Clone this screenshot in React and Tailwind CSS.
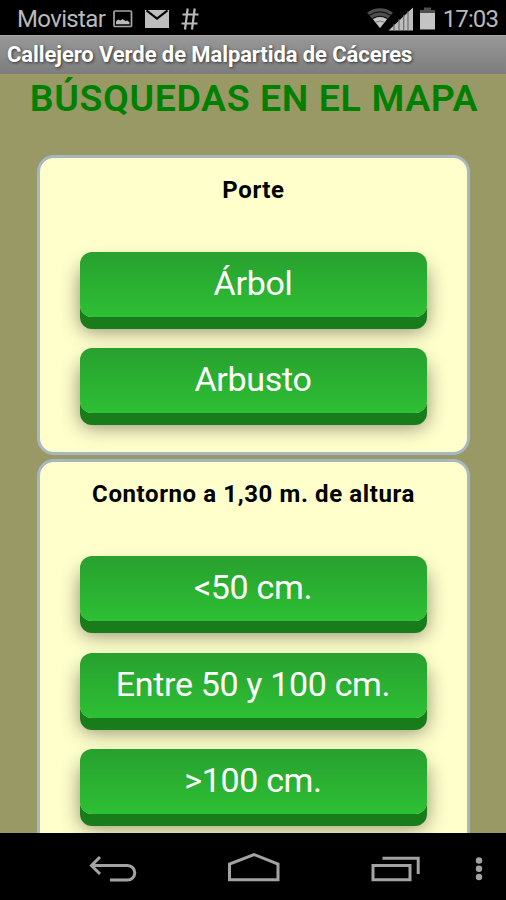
import React from "react";

const groups = [
	{ title: "Porte", options: ["Árbol", "Arbusto"] },
	{
		title: "Contorno a 1,30 m. de altura",
		options: ["<50 cm.", "Entre 50 y 100 cm.", ">100 cm."],
	},
];

const StatusBar = () => (
	<div className="flex h-[35px] shrink-0 items-center bg-black pl-[17px] pr-[8px] pt-[2px] text-[#b9b9b9]">
		<span className="w-[96px] whitespace-nowrap text-[24px] leading-none tracking-[-0.65px]">
			Movistar
		</span>
		<svg className="h-[18px] w-[20px]" viewBox="0 0 20 18">
			<rect
				x="1"
				y="1"
				width="17.5"
				height="15.5"
				rx="1"
				fill="none"
				stroke="#a5a5a5"
				strokeWidth="1.7"
			/>
			<path
				d="M3 14.2V11.5L5 9.5l2.5 1 2-1.5 3 2 2-0.5 2 2V14.2z"
				fill="#b9b9b9"
			/>
		</svg>
		<svg className="ml-[12px] h-[18px] w-[24px]" viewBox="0 0 24 18">
			<rect width="24" height="18" fill="#bdbdbd" />
			<path
				d="M1.5 0.5L12 8.5 22.5 0.5"
				fill="none"
				stroke="#000"
				strokeWidth="2.2"
			/>
		</svg>
		<svg className="ml-[12px] h-[22px] w-[18px]" viewBox="0 0 18 22">
			<path
				d="M6.7 0.5L4 21.5M13.7 0.5L11 21.5M1.5 6.5H17.5M0.5 15.5H16.5"
				fill="none"
				stroke="#b9b9b9"
				strokeWidth="2.2"
			/>
		</svg>
		<svg className="ml-auto h-[24px] w-[70px]" viewBox="0 0 70 24">
			<path d="M0 5.5Q13 -3 26 5.5L13 21z" fill="#4e4e4e" />
			<path
				d="M2.5 8.2Q13 1.5 23.5 8.2M5.5 11.6Q13 7 20.5 11.6"
				fill="none"
				stroke="#161616"
				strokeWidth="1.2"
			/>
			<path d="M6 12.2Q13 8 20 12.2L13 21z" fill="#c4c4c4" />
			<path
				d="M8 15.4Q13 12.5 18 15.4"
				fill="none"
				stroke="#777"
				strokeWidth="1"
			/>
			<path d="M21.5 23.5L46 0.5V23.5z" fill="#bdbdbd" />
			<path
				d="M27 24V17M32 24V12M36.7 24V8M41 24V4"
				stroke="#666"
				strokeWidth="1.1"
			/>
			<path d="M57 0.5h7V3h4v4.5H53V3h4z" fill="#4e4e4e" />
			<rect x="53" y="6" width="15" height="16.5" fill="#c4c4c4" />
		</svg>
		<span className="ml-[6px] text-[24px] leading-none tracking-[-0.9px]">
			17:03
		</span>
	</div>
);

const TitleBar = () => (
	<div className="flex h-[39px] shrink-0 items-center border-t border-[#a8a8a8] bg-linear-to-b from-[#989898] to-[#7d7d7d] pl-[7px]">
		<span className="whitespace-nowrap text-[22px] leading-none font-bold tracking-[-0.09px] text-white [text-shadow:1px_1px_3px_#333]">
			Callejero Verde de Malpartida de Cáceres
		</span>
	</div>
);

const OptionButton = ({ label }) => (
	<button className="mb-[12px] flex h-[65px] w-[347px] justify-center rounded-[12px] bg-linear-to-b from-[#28a02f] to-[#2dc034] pt-[11px] text-[34px] leading-[40px] tracking-[-0.33px] whitespace-nowrap text-white shadow-[0_12px_0_#197c1b,0_14px_20px_rgba(0,0,0,0.45)]">
		{label}
	</button>
);

const GroupCard = ({ title, options }) => (
	<section className="flex w-[433px] flex-col items-center rounded-[17px] border-[3px] border-[#a7b7c1] bg-[#ffffcc] pt-[16px] pb-[27px]">
		<h2 className="pl-px text-[24px] leading-[32px] font-bold tracking-[0.6px] whitespace-nowrap text-black">
			{title}
		</h2>
		<div className="mt-[45.8px] flex flex-col gap-[19.7px]">
			{options.map((option) => (
				<OptionButton key={option} label={option} />
			))}
		</div>
	</section>
);

const NavBar = () => (
	<div className="h-[67px] shrink-0 bg-black">
		<svg
			className="h-[67px] w-[506px]"
			viewBox="0 833 506 67"
			fill="none"
			stroke="#a3a3a3"
			strokeWidth="3"
		>
			<path d="M100 857L91.5 865.5 100 874M92 865.5H127.5a7.2 7.2 0 0 1 0 14.6H110" />
			<path d="M229.5 879.8V864L254 854.5 278 864V879.8z" />
			<path d="M373 865.5H410V879.8H373zM382.5 858.3H418.2V874" />
			<g fill="#a3a3a3" stroke="none">
				<circle cx="479" cy="860.5" r="3.2" />
				<circle cx="479" cy="868.7" r="3.2" />
				<circle cx="479" cy="877" r="3.2" />
			</g>
		</svg>
	</div>
);

const App = () => {
	return (
		<div className="flex h-[900px] w-[506px] flex-col overflow-hidden bg-[#999966] font-['Roboto','Liberation_Sans',sans-serif]">
			<StatusBar />
			<TitleBar />
			<main className="flex min-h-0 flex-1 flex-col items-center overflow-hidden">
				<h1 className="mt-px shrink-0 pl-[2px] text-[37.5px] leading-[46px] font-semibold tracking-[0.6px] whitespace-nowrap text-[#008000]">
					BÚSQUEDAS EN EL MAPA
				</h1>
				<div className="mt-[34px] flex flex-col gap-[3.7px]">
					{groups.map((group) => (
						<GroupCard key={group.title} {...group} />
					))}
				</div>
			</main>
			<NavBar />
		</div>
	);
};

export default App;
